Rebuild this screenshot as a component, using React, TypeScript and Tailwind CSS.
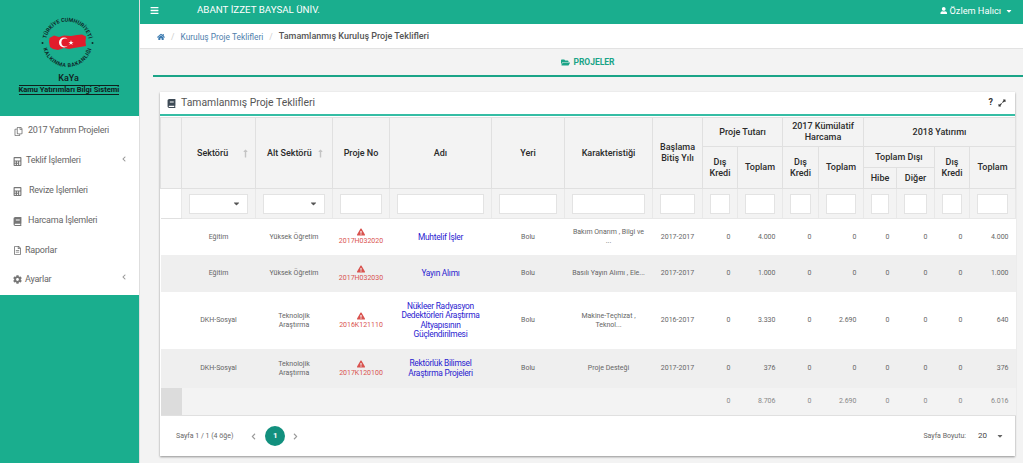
import React from "react";
import {
  FaBars,
  FaBook,
  FaCalculator,
  FaCaretDown,
  FaChevronLeft,
  FaChevronRight,
  FaCog,
  FaExclamationTriangle,
  FaExpandAlt,
  FaFolderOpen,
  FaHome,
  FaLongArrowAltUp,
  FaRegCopy,
  FaRegFileAlt,
  FaUser,
} from "react-icons/fa";

const colWidths = [21, 74, 77, 57, 102, 73, 88, 50, 35, 45, 36, 45, 33, 38, 35, 46];

const menu = [
  { label: "2017 Yatırım Projeleri", icon: <FaRegCopy />, cls: "h-[30px] pl-[14px] gap-[5px]", arrow: false },
  { label: "Teklif İşlemleri", icon: <FaCalculator />, cls: "h-[30px] pl-[13px] gap-[4px]", arrow: true },
  { label: "Revize İşlemleri", icon: <FaCalculator />, cls: "h-[30px] pl-[13px] gap-[7px]", arrow: false },
  { label: "Harcama İşlemleri", icon: <FaBook />, cls: "h-[30px] pl-[13px] gap-[6px]", arrow: false },
  { label: "Raporlar", icon: <FaRegFileAlt />, cls: "h-[29px] pl-[13px] gap-[3px]", arrow: false },
  { label: "Ayarlar", icon: <FaCog />, cls: "h-[29px] pl-[13px] gap-[3px]", arrow: true },
];

const rows = [
  {
    sektor: "Eğitim",
    alt: ["Yüksek Öğretim"],
    no: "2017H032020",
    adi: ["Muhtelif İşler"],
    kar: ["Bakım Onarım , Bilgi ve", "..."],
    yil: "2017-2017",
    values: ["0", "4.000", "0", "0", "0", "0", "0", "4.000"],
    height: "h-[36px]",
    bg: "bg-white",
  },
  {
    sektor: "Eğitim",
    alt: ["Yüksek Öğretim"],
    no: "2017H032030",
    adi: ["Yayın Alımı"],
    kar: ["Basılı Yayın Alımı , Ele..."],
    yil: "2017-2017",
    values: ["0", "1.000", "0", "0", "0", "0", "0", "1.000"],
    height: "h-[37px]",
    bg: "bg-[#efefef]",
  },
  {
    sektor: "DKH-Sosyal",
    alt: ["Teknolojik", "Araştırma"],
    no: "2016K121110",
    adi: ["Nükleer Radyasyon", "Dedektörleri Araştırma", "Altyapısının", "Güçlendirilmesi"],
    kar: ["Makine-Teçhizat ,", "Teknol..."],
    yil: "2016-2017",
    values: ["0", "3.330", "0", "2.690", "0", "0", "0", "640"],
    height: "h-[57px]",
    bg: "bg-white",
  },
  {
    sektor: "DKH-Sosyal",
    alt: ["Teknolojik", "Araştırma"],
    no: "2017K120100",
    adi: ["Rektörlük Bilimsel", "Araştırma Projeleri"],
    kar: ["Proje Desteği"],
    yil: "2017-2017",
    values: ["0", "376", "0", "0", "0", "0", "0", "376"],
    height: "h-[39px]",
    bg: "bg-[#efefef]",
  },
];

const totals = ["0", "8.706", "0", "2.690", "0", "0", "0", "6.016"];

function Logo() {
  return (
    <svg viewBox="0 0 56 56" className="h-[56px] w-[56px]">
      <defs>
        <path id="ringTop" d="M 5.2 31 A 21.5 21.5 0 1 1 47.8 31" />
        <path id="ringBottom" d="M 1.8 31 A 25 25 0 0 0 51.2 31" />
      </defs>
      <text fontSize="5.4" fontWeight="700" fill="#0f2a2a" fontFamily="Roboto, sans-serif">
        <textPath href="#ringTop" startOffset="50%" textAnchor="middle">
          TÜRKİYE CUMHURİYETİ
        </textPath>
      </text>
      <text fontSize="5.4" fontWeight="700" letterSpacing="0.5" fill="#0f2a2a" fontFamily="Roboto, sans-serif">
        <textPath href="#ringBottom" startOffset="50%" textAnchor="middle">
          KALKINMA BAKANLIĞI
        </textPath>
      </text>
      <circle cx="1.5" cy="28" r="1" fill="#0f2a2a" />
      <circle cx="51.5" cy="28" r="1" fill="#0f2a2a" />
      <path
        d="M8.5 23 L13 20.5 L18 22 L23 20.5 L30 21 L36 20 L41 19.5 L45 21.5 L44.5 27 L45 31 L39 32 L33 33 L28 34 L23 33 L17 35 L12 34 L9 32 L8 27 Z"
        fill="#e21d2c"
      />
      <circle cx="23" cy="27.5" r="5" fill="#fff" />
      <circle cx="24.4" cy="27.5" r="4" fill="#e21d2c" />
      <path d="M30 25 L30.6 26.9 L32.6 26.9 L31 28.1 L31.6 30 L30 28.8 L28.4 30 L29 28.1 L27.4 26.9 L29.4 26.9 Z" fill="#fff" />
    </svg>
  );
}

function Filter({ select = false }: { select?: boolean }) {
  return (
    <div className="flex h-[20px] w-full items-center justify-end border border-[#e3e3e3] bg-white pr-[6px] text-[9px] text-[#555]">
      {select && <FaCaretDown />}
    </div>
  );
}

function HeadCell({
  children,
  colSpan,
  rowSpan,
  className = "",
}: {
  children?: React.ReactNode;
  colSpan?: number;
  rowSpan?: number;
  className?: string;
}) {
  return (
    <th
      colSpan={colSpan}
      rowSpan={rowSpan}
      className={`border border-[#e0e0e0] p-0 text-center align-middle text-[9px] leading-[11px] font-medium text-[#2b2b2b] ${className}`}
    >
      {children}
    </th>
  );
}

function SortHead({ label, cls, arrowCls }: { label: string; cls: string; arrowCls: string }) {
  return (
    <HeadCell rowSpan={3}>
      <div className={`flex items-center ${cls}`}>
        <span>{label}</span>
        <FaLongArrowAltUp className={`text-[9px] text-[#c4c4c4] ${arrowCls}`} />
      </div>
    </HeadCell>
  );
}

function Lines({ lines }: { lines: string[] }) {
  return (
    <>
      {lines.map((line) => (
        <div key={line}>{line}</div>
      ))}
    </>
  );
}

export default function App() {
  return (
    <div className="flex h-[463px] w-[1023px] overflow-hidden bg-[#f3f3f3] font-['Roboto',sans-serif]">
      <aside className="flex w-[140px] shrink-0 flex-col border-r border-[#dedede] bg-[#1aae8e]">
        <div className="flex h-[116px] w-[137px] flex-col items-center pt-[15px]">
          <Logo />
          <div className="mt-[2px] text-[9px] leading-[11px] font-medium text-[#10201c]">KaYa</div>
          <div className="mt-[1px] w-[100px] border-y border-[#10201c] text-center text-[7.5px] leading-[8px] font-bold whitespace-nowrap text-[#10201c]">
            Kamu Yatırımları Bilgi Sistemi
          </div>
        </div>
        <nav className="flex h-[179px] flex-col bg-white">
          {menu.map((item) => (
            <div
              key={item.label}
              className={`flex items-center pr-[12px] text-[9px] tracking-[-0.22px] text-[#666] ${item.cls}`}
            >
              <span className="text-[9px] text-[#777]">{item.icon}</span>
              <span className="flex-1 whitespace-nowrap">{item.label}</span>
              {item.arrow && <FaChevronLeft className="mb-[5px] text-[6px] text-[#999]" />}
            </div>
          ))}
        </nav>
      </aside>

      <main className="flex min-w-0 flex-1 flex-col">
        <header className="flex h-[24px] shrink-0 items-center bg-[#1aae8e] pr-[10px] pb-[3px] pl-[10px] text-white">
          <FaBars className="text-[9px]" />
          <span className="ml-[38px] flex-1 text-[9.75px] whitespace-nowrap">ABANT İZZET BAYSAL ÜNİV.</span>
          <FaUser className="mr-[2px] text-[7.5px]" />
          <span className="text-[9.2px]">Özlem Halıcı</span>
          <FaCaretDown className="ml-[4px] text-[8px]" />
        </header>

        <div className="flex h-[25px] shrink-0 items-center border-b border-[#e2e2e2] bg-white pt-[2px] pl-[17px] text-[8.4px]">
          <FaHome className="text-[8px] text-[#3b7ab0]" />
          <span className="mx-[6px] text-[#ccc]">/</span>
          <span className="text-[#4f80ad]">Kuruluş Proje Teklifleri</span>
          <span className="mx-[6px] text-[#ccc]">/</span>
          <span className="text-[9px] font-medium text-[#555]">Tamamlanmış Kuruluş Proje Teklifleri</span>
        </div>

        <div className="ml-[13px] flex h-[28px] shrink-0 items-center justify-center gap-[3px] border-b-2 border-[#1aa487] pt-[1px] text-[8.5px] font-bold text-[#1aa487]">
          <FaFolderOpen className="text-[9px]" />
          PROJELER
        </div>

        <section className="mt-[15px] ml-[20px] flex h-[364px] w-[855px] flex-col bg-white shadow-[0_1px_2px_rgba(0,0,0,0.4)]">
          <div className="flex h-[24px] shrink-0 items-center border-b-2 border-[#35bda4] pr-[9px] pl-[7px]">
            <FaBook className="mr-[5px] text-[9px] text-[#3d4a55]" />
            <span className="flex-1 text-[10.4px] text-[#555]">Tamamlanmış Proje Teklifleri</span>
            <span className="mr-[5px] text-[9px] font-bold text-[#333]">?</span>
            <FaExpandAlt className="text-[8px] text-[#333]" />
          </div>

          <table className="mt-[1px] w-[855px] table-fixed border-collapse">
            <colgroup>
              {colWidths.map((w, i) => (
                <col key={i} style={{ width: w }} />
              ))}
            </colgroup>
            <thead className="bg-[#f3f3f3]">
              <tr className="h-[29px]">
                <HeadCell rowSpan={3} />
                <SortHead label="Sektörü" cls="pl-[15px]" arrowCls="ml-[13px]" />
                <SortHead label="Alt Sektörü" cls="pl-[11px]" arrowCls="ml-[4px]" />
                <HeadCell rowSpan={3}>Proje No</HeadCell>
                <HeadCell rowSpan={3}>Adı</HeadCell>
                <HeadCell rowSpan={3}>Yeri</HeadCell>
                <HeadCell rowSpan={3}>Karakteristiği</HeadCell>
                <HeadCell rowSpan={3}>
                  Başlama
                  <br />
                  Bitiş Yılı
                </HeadCell>
                <HeadCell colSpan={2}>Proje Tutarı</HeadCell>
                <HeadCell colSpan={2}>
                  2017 Kümülatif
                  <br />
                  Harcama
                </HeadCell>
                <HeadCell colSpan={4}>2018 Yatırımı</HeadCell>
              </tr>
              <tr className="h-[21px]">
                <HeadCell rowSpan={2}>
                  Dış
                  <br />
                  Kredi
                </HeadCell>
                <HeadCell rowSpan={2}>Toplam</HeadCell>
                <HeadCell rowSpan={2}>
                  Dış
                  <br />
                  Kredi
                </HeadCell>
                <HeadCell rowSpan={2}>Toplam</HeadCell>
                <HeadCell colSpan={2}>Toplam Dışı</HeadCell>
                <HeadCell rowSpan={2}>
                  Dış
                  <br />
                  Kredi
                </HeadCell>
                <HeadCell rowSpan={2}>Toplam</HeadCell>
              </tr>
              <tr className="h-[21px]">
                <HeadCell>Hibe</HeadCell>
                <HeadCell>Diğer</HeadCell>
              </tr>
              <tr className="h-[30px]">
                <th className="border-y border-[#e0e0e0] bg-white p-0" />
                {colWidths.slice(1).map((_, i) => (
                  <th key={i} className="border border-[#e8e8e8] px-[7px] py-0">
                    <Filter select={i < 2} />
                  </th>
                ))}
              </tr>
            </thead>
            <tbody className="text-center text-[7px] leading-[9px] text-[#666]">
              {rows.map((row) => (
                <tr key={row.no} className={`${row.height} ${row.bg} [&>td]:pt-[1px]`}>
                  <td />
                  <td>{row.sektor}</td>
                  <td>
                    <Lines lines={row.alt} />
                  </td>
                  <td className="text-[#d9534f]">
                    <FaExclamationTriangle className="mx-auto mb-[1px] text-[8px] text-[#d9534f]" />
                    <div>{row.no}</div>
                  </td>
                  <td className="text-[8.4px] leading-[9.4px] tracking-[-0.25px] text-[#2a22d0]">
                    <Lines lines={row.adi} />
                  </td>
                  <td>Bolu</td>
                  <td>
                    <Lines lines={row.kar} />
                  </td>
                  <td>{row.yil}</td>
                  {row.values.map((v, i) => (
                    <td key={i} className="pr-[7px] text-right">
                      {v}
                    </td>
                  ))}
                </tr>
              ))}
              <tr className="h-[28px] border-b border-[#e0e0e0] bg-[#f3f3f3] text-[#888]">
                <td className="bg-[#dcdcdc]" />
                <td colSpan={7} />
                {totals.map((v, i) => (
                  <td key={i} className="pr-[7px] text-right">
                    {v}
                  </td>
                ))}
              </tr>
            </tbody>
          </table>

          <div className="flex flex-1 items-center pr-[11px] pl-[16px] text-[7px] text-[#666]">
            <span>Sayfa 1 / 1 (4 öğe)</span>
            <FaChevronLeft className="ml-[17px] text-[7px] text-[#999]" />
            <span className="ml-[8px] flex h-[20px] w-[20px] items-center justify-center rounded-full bg-[#12907e] text-[8px] font-bold text-white">
              1
            </span>
            <FaChevronRight className="ml-[7px] text-[7px] text-[#999]" />
            <span className="ml-auto">Sayfa Boyutu:</span>
            <span className="ml-[12px] text-[8px] text-[#444]">20</span>
            <FaCaretDown className="ml-[9px] text-[8px] text-[#666]" />
          </div>
        </section>
      </main>
    </div>
  );
}
